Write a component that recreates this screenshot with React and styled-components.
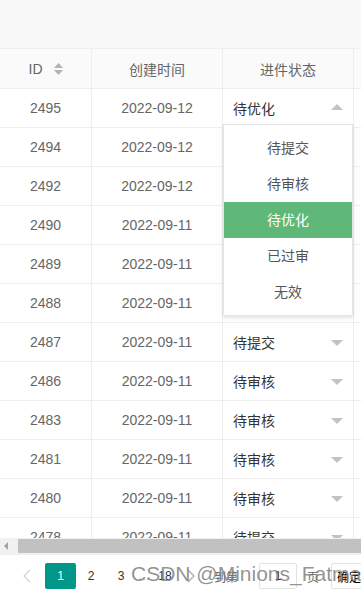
import styled, { createGlobalStyle } from "styled-components";

const GlobalStyle = createGlobalStyle`
  html, body {
    margin: 0;
    padding: 0;
    background: #fff;
  }
  * {
    box-sizing: border-box;
  }
  body {
    font-family: "Liberation Sans", "Noto Sans CJK SC", sans-serif;
    font-size: 14px;
    color: #666;
  }
`;

const COLS = "92px 131px 131px 1fr";

const rows = [
  { id: 2495, date: "2022-09-12", status: "待优化", open: true },
  { id: 2494, date: "2022-09-12", status: "待提交" },
  { id: 2492, date: "2022-09-12", status: "待提交" },
  { id: 2490, date: "2022-09-11", status: "待提交" },
  { id: 2489, date: "2022-09-11", status: "待提交" },
  { id: 2488, date: "2022-09-11", status: "待提交" },
  { id: 2487, date: "2022-09-11", status: "待提交" },
  { id: 2486, date: "2022-09-11", status: "待审核" },
  { id: 2483, date: "2022-09-11", status: "待审核" },
  { id: 2481, date: "2022-09-11", status: "待审核" },
  { id: 2480, date: "2022-09-11", status: "待审核" },
  { id: 2478, date: "2022-09-11", status: "待提交" },
];

const options = ["待提交", "待审核", "待优化", "已过审", "无效"];

const App = () => {
  return (
    <>
      <GlobalStyle />
      <Page>
        <Toolbar />
        <HeaderRow>
          <HeadCell>
            ID
            <SortIcon width="9" height="12" viewBox="0 0 9 12">
              <path d="M4.5 0 L9 5 L0 5 Z" fill="#b2b2b2" />
              <path d="M4.5 12 L9 7 L0 7 Z" fill="#b2b2b2" />
            </SortIcon>
          </HeadCell>
          <HeadCell>创建时间</HeadCell>
          <HeadCell>进件状态</HeadCell>
          <HeadCell $last />
        </HeaderRow>
        <Body>
          {rows.map((row) => (
            <Row key={row.id}>
              <Cell>{row.id}</Cell>
              <Cell>{row.date}</Cell>
              <SelectCell>
                <SelectText>{row.status}</SelectText>
                <Arrow $up={row.open} />
                {row.open && (
                  <Dropdown>
                    {options.map((opt) => (
                      <Option key={opt} $active={opt === row.status}>
                        {opt}
                      </Option>
                    ))}
                  </Dropdown>
                )}
              </SelectCell>
              <Cell $last />
            </Row>
          ))}
        </Body>
        <Scrollbar>
          <ScrollArrow />
          <Thumb />
        </Scrollbar>
        <Pager>
          <PageBtn $w={30} $gap={3}>
            <svg width="8" height="14" viewBox="0 0 8 14">
              <path d="M7 1 L1 7 L7 13" stroke="#d2d2d2" strokeWidth="1.3" fill="none" />
            </svg>
          </PageBtn>
          <PageBtn $w={31} $active>1</PageBtn>
          <PageBtn $w={30}>2</PageBtn>
          <PageBtn $w={30}>3</PageBtn>
          <PageBtn $w={16} $muted>…</PageBtn>
          <PageBtn $w={26}>18</PageBtn>
          <PageBtn $w={26}>
            <svg width="8" height="14" viewBox="0 0 8 14">
              <path d="M1 1 L7 7 L1 13" stroke="#aaa" strokeWidth="1.3" fill="none" />
            </svg>
          </PageBtn>
          <SkipLabel $l={10} $r={21}>到第</SkipLabel>
          <SkipInput>1</SkipInput>
          <SkipLabel $l={10} $r={12}>页</SkipLabel>
          <SkipButton>确定</SkipButton>
          <Watermark>CSDN @Minions_Fatman</Watermark>
        </Pager>
      </Page>
    </>
  );
};

const Page = styled.div`
  width: 361px;
  height: 594px;
  overflow: hidden;
  display: flex;
  flex-direction: column;
  background: #fff;
`;

const Toolbar = styled.div`
  height: 49px;
  flex-shrink: 0;
  background: #f8f8f8;
  border-bottom: 1px solid #eee;
`;

const HeaderRow = styled.div`
  display: grid;
  grid-template-columns: ${COLS};
  height: 40px;
  flex-shrink: 0;
  background: #fafafa;
  border-bottom: 1px solid #eee;
`;

const HeadCell = styled.div`
  display: flex;
  align-items: center;
  justify-content: center;
  gap: 11px;
  color: #666;
  border-right: ${(p) => (p.$last ? "none" : "1px solid #eee")};
`;

const SortIcon = styled.svg`
  display: block;
`;

const Body = styled.div`
  flex: 1;
  overflow: hidden;
  min-height: 0;
`;

const Row = styled.div`
  display: grid;
  grid-template-columns: ${COLS};
  height: 39px;
  border-bottom: 1px solid #eee;
`;

const Cell = styled.div`
  display: flex;
  align-items: center;
  justify-content: center;
  color: #666;
  border-right: ${(p) => (p.$last ? "none" : "1px solid #eee")};
`;

const SelectCell = styled.div`
  position: relative;
  display: flex;
  align-items: center;
  justify-content: space-between;
  padding: 0 10px 0 10px;
  border-right: 1px solid #eee;
`;

const SelectText = styled.span`
  color: #333;
`;

const Arrow = styled.span`
  width: 0;
  height: 0;
  border-left: 6px solid transparent;
  border-right: 6px solid transparent;
  ${(p) =>
    p.$up
      ? "border-bottom: 6px solid #c2c2c2; margin-top: -3px;"
      : "border-top: 6px solid #c2c2c2; margin-top: 2px;"}
`;

const Dropdown = styled.div`
  position: absolute;
  top: 35px;
  left: 0;
  width: 130px;
  padding: 5px 0;
  background: #fff;
  border: 1px solid #e6e6e6;
  box-shadow: 0 2px 4px rgba(0, 0, 0, 0.12);
  z-index: 10;
`;

const Option = styled.div`
  height: 36px;
  line-height: 36px;
  text-align: center;
  color: ${(p) => (p.$active ? "#fff" : "#555")};
  background: ${(p) => (p.$active ? "#5fb878" : "transparent")};
`;

const Scrollbar = styled.div`
  height: 16px;
  flex-shrink: 0;
  display: flex;
  align-items: center;
  background: #f1f1f1;
  padding-left: 4px;
`;

const ScrollArrow = styled.span`
  width: 0;
  height: 0;
  border-top: 4px solid transparent;
  border-bottom: 4px solid transparent;
  border-right: 4px solid #a3a3a3;
  margin-right: 10px;
`;

const Thumb = styled.div`
  flex: 1;
  height: 14px;
  background: #c1c1c1;
`;

const Pager = styled.div`
  position: relative;
  height: 40px;
  flex-shrink: 0;
  display: flex;
  align-items: center;
  padding: 3px 0 0 12px;
  border-top: 1px solid #eee;
  font-size: 12px;
`;

const PageBtn = styled.div`
  flex-shrink: 0;
  height: 26px;
  width: ${(p) => p.$w}px;
  margin-right: ${(p) => p.$gap || 0}px;
  display: flex;
  align-items: center;
  justify-content: center;
  border-radius: 2px;
  color: ${(p) => (p.$active ? "#fff" : p.$muted ? "#999" : "#333")};
  background: ${(p) => (p.$active ? "#009688" : "transparent")};
`;

const SkipLabel = styled.span`
  flex-shrink: 0;
  color: #666;
  margin: 0 ${(p) => p.$r}px 0 ${(p) => p.$l}px;
  white-space: nowrap;
`;

const SkipInput = styled.div`
  flex-shrink: 0;
  width: 38px;
  height: 26px;
  border: 1px solid #e2e2e2;
  border-radius: 2px;
  display: flex;
  align-items: center;
  justify-content: center;
  color: #333;
`;

const SkipButton = styled.div`
  flex-shrink: 0;
  height: 26px;
  padding: 0 10px 0 5px;
  border: 1px solid #e2e2e2;
  border-radius: 2px;
  display: flex;
  align-items: center;
  color: #000;
  white-space: nowrap;
`;

const Watermark = styled.div`
  position: absolute;
  left: 131px;
  top: 7px;
  font-size: 21px;
  color: rgba(120, 120, 120, 0.8);
  white-space: nowrap;
  pointer-events: none;
`;

export default App;
